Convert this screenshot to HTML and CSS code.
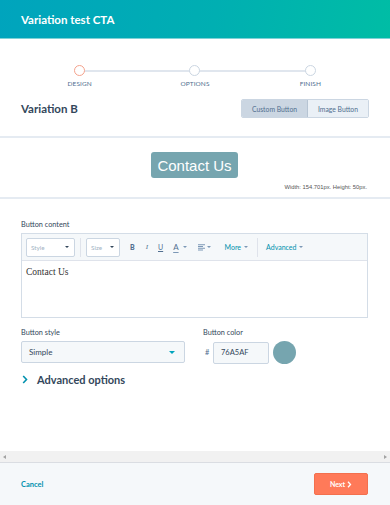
FILE: index.html
```html
<!DOCTYPE html>
<html>
<head>
<meta charset="utf-8">
<link rel="stylesheet" href="styles.css">
</head>
<body>
<div class="app">
  <header class="hdr">Variation test CTA</header>

  <section class="top">
    <div class="steps">
      <div class="step active"><span class="dot"></span><span class="lbl">DESIGN</span></div>
      <div class="step"><span class="dot"></span><span class="lbl">OPTIONS</span></div>
      <div class="step"><span class="dot"></span><span class="lbl">FINISH</span></div>
    </div>
    <div class="varrow">
      <h2 class="vtitle">Variation B</h2>
      <div class="seg">
        <span class="segbtn on">Custom Button</span>
        <span class="segbtn">Image Button</span>
      </div>
    </div>
  </section>

  <section class="preview">
    <div class="cta">Contact Us</div>
    <div class="dims">Width: 154.701px. Height: 50px.</div>
  </section>

  <section class="form">
    <div class="label">Button content</div>
    <div class="editor">
      <div class="toolbar">
        <span class="tsel wstyle">Style<i class="caret"></i></span>
        <span class="tsep"></span>
        <span class="tsel wsize">Size<i class="caret"></i></span>
        <span class="tb bold">B</span>
        <span class="tb ital">I</span>
        <span class="tb und">U</span>
        <span class="tb col">A<i class="caret g"></i></span>
        <span class="tb aln">
          <svg width="7" height="7" viewBox="0 0 7 7"><path d="M0 .75h7M0 2.5h5M0 4.25h7M0 6h5" stroke="#7c98b6" stroke-width="1"/></svg><i class="caret g"></i>
        </span>
        <span class="tlink more">More<i class="caret g"></i></span>
        <span class="tsep sep2"></span>
        <span class="tlink advl">Advanced<i class="caret g"></i></span>
      </div>
      <div class="ebody">Contact Us</div>
    </div>

    <div class="row2">
      <div class="fstyle">
        <div class="label">Button style</div>
        <div class="select">Simple<i class="caret teal"></i></div>
      </div>
      <div class="fcolor">
        <div class="label">Button color</div>
        <div class="colrow">
          <span class="hash">#</span>
          <span class="hex">76A5AF</span>
          <span class="swatch"></span>
        </div>
      </div>
    </div>

    <div class="adv">
      <svg class="chev" width="6" height="9" viewBox="0 0 6 9"><path d="M1.2 1l3.3 3.5L1.2 8" fill="none" stroke="#0091ae" stroke-width="1.6"/></svg>
      <span>Advanced options</span>
    </div>
  </section>

  <div class="hscroll">
    <span class="arr l"></span>
    <span class="arr r"></span>
  </div>

  <footer class="foot">
    <span class="cancel">Cancel</span>
    <span class="next">Next <svg width="5" height="7" viewBox="0 0 5 7"><path d="M1 .8l2.5 2.7L1 6.2" fill="none" stroke="#fff" stroke-width="1.3"/></svg></span>
  </footer>
</div>
</body>
</html>
```

FILE: styles.css
```css
* { box-sizing: border-box; margin: 0; padding: 0; }
html, body { width: 390px; height: 505px; overflow: hidden; background: #fff; }
body { font-family: Lato, "Open Sans", sans-serif; color: #33475b; }

.app { display: flex; flex-direction: column; height: 505px; }

.hdr {
  height: 39px; flex: none;
  display: flex; align-items: center;
  padding-left: 21px;
  background: linear-gradient(100deg, #00a4bd 0%, #00afb2 55%, #00bda5 100%);
  color: #fff; font-weight: 700; font-size: 11.5px;
  border-bottom: 1px solid #7fd1d6;
}

.top { padding: 26px 22px 0 22px; border-bottom: 2px solid #e5ebf2; height: 99px; flex: none; }
.steps { display: grid; grid-template-columns: repeat(3, 1fr); }
.step { position: relative; display: flex; flex-direction: column; align-items: center; }
.step + .step::before {
  content: ""; position: absolute; top: 5px; left: -50%; right: 50%;
  height: 1.5px; background: #e0e6ee;
}
.dot {
  position: relative; z-index: 1;
  width: 11px; height: 11px; border-radius: 50%;
  border: 1.3px solid #cbd6e2; background: #fff;
}
.step.active .dot { border-color: #f5a28c; }
.lbl { margin-top: 4px; font-size: 6.5px; color: #516f90; letter-spacing: 0.1px; }

.varrow { display: flex; align-items: center; justify-content: space-between; margin-top: 12px; }
.vtitle { font-size: 11.5px; font-weight: 700; color: #33475b; margin-left: -1px; }
.seg { display: flex; border: 1px solid #cbd6e2; border-radius: 2px; overflow: hidden; margin-right: -1px; }
.segbtn { height: 17px; width: 60px; display: flex; align-items: center; justify-content: center; font-size: 6.8px; color: #516f90; background: #eaf0f6; }
.segbtn.on { width: 66px; background: #cbd6e2; border-right: 1px solid #b6c4d3; }

.preview { height: 61px; flex: none; border-bottom: 2px solid #e5ebf2; display: flex; flex-direction: column; align-items: center; padding: 14px 23px 0 23px; }
.cta {
  width: 87px; height: 26px; border-radius: 3px;
  background: #76a5af; color: #fff;
  font-family: "Liberation Sans", Arial, sans-serif; font-size: 15px;
  display: flex; align-items: center; justify-content: center;
  margin-left: -1px;
}
.dims { align-self: flex-end; margin-top: 6px; font-size: 5.8px; color: #555; font-family: "Liberation Sans", Arial, sans-serif; }

.form { flex: 1; padding: 21px 22px 0 21px; }
.label { font-size: 7.3px; color: #33475b; margin-bottom: 4px; }

.editor { border: 1px solid #d4dde7; }
.toolbar {
  height: 27px; background: #f5f8fa; border-bottom: 1px solid #dfe3eb;
  display: flex; align-items: center; padding-left: 4px;
}
.tsel {
  height: 19px; border: 1px solid #cbd6e2; background: #fff; border-radius: 2px;
  display: flex; align-items: center; justify-content: space-between;
  padding: 0 5px 0 4px; font-size: 6.3px; color: #a3b3c4;
}
.wstyle { width: 49px; }
.wsize { width: 34px; }
.tsep { width: 1px; height: 19px; background: #dfe3eb; margin: 0 5px; }
.caret { display: inline-block; width: 0; height: 0; border-left: 2.5px solid transparent; border-right: 2.5px solid transparent; border-top: 2.5px solid #33475b; margin-left: 3px; }
.caret.g { border-top-color: #7c98b6; }
.caret.teal { border-top-color: #00a4bd; border-left-width: 3px; border-right-width: 3px; border-top-width: 3px; }
.tb { font-size: 7px; color: #516f90; display: flex; align-items: center; }
.bold { font-weight: 900; margin-left: 10px; }
.ital { font-style: italic; font-family: "Liberation Serif", serif; margin-left: 11px; }
.und { text-decoration: underline; margin-left: 10px; }
.col { margin-left: 10px; font-size: 8px; text-decoration: underline; text-decoration-thickness: 1.3px; text-underline-offset: 2px; text-decoration-color: #7c98b6; }
.col .caret { text-decoration: none; margin-left: 4px; }
.aln { margin-left: 11px; }
.aln .caret { margin-left: 2px; }
.tlink { font-size: 7px; color: #0091ae; display: flex; align-items: center; }
.more { margin-left: 14px; }
.sep2 { margin-left: 9px; margin-right: 0; }
.advl { margin-left: 8px; }

.ebody { height: 56px; padding: 6px 4px; font-family: "Liberation Serif", serif; font-size: 9.5px; color: #333; }

.row2 { display: flex; margin-top: 10px; }
.fstyle { width: 164px; }
.select {
  height: 22px; background: #f5f8fa; border: 1px solid #cbd6e2; border-radius: 2px;
  display: flex; align-items: center; justify-content: space-between;
  padding: 0 9px 0 7px; font-size: 8px; color: #33475b;
}
.fcolor { margin-left: 18px; }
.colrow { display: flex; align-items: center; }
.hash { font-size: 7.5px; color: #516f90; width: 8px; margin-left: 2px; }
.hex {
  width: 56px; height: 22px; background: #f5f8fa; border: 1px solid #cbd6e2; border-radius: 2px;
  display: flex; align-items: center; padding-left: 7px; font-size: 7.5px; color: #33475b;
}
.swatch { width: 23px; height: 23px; border-radius: 50%; background: #76a5af; margin-left: 4px; }

.adv { display: flex; align-items: center; margin-top: 9px; }
.chev { margin-left: 1px; }
.adv span { margin-left: 9px; font-size: 11px; font-weight: 700; color: #33475b; }

.hscroll { height: 12px; flex: none; background: #f1f1f1; border-bottom: 1px solid #dadde2; display: flex; align-items: center; justify-content: space-between; padding: 0 3px; }
.arr { width: 0; height: 0; border-top: 2.5px solid transparent; border-bottom: 2.5px solid transparent; }
.arr.l { border-right: 3px solid #a3a3a3; }
.arr.r { border-left: 3px solid #a3a3a3; }

.foot { height: 42px; flex: none; background: #f5f8fa; display: flex; align-items: center; justify-content: space-between; padding: 0 22px 0 21px; }
.cancel { font-size: 7.5px; font-weight: 700; color: #0091ae; }
.next {
  width: 54px; height: 22px; background: #ff7a59; border-radius: 2px; border: 1px solid #f3704e;
  color: #fff; font-size: 7px; font-weight: 700;
  display: flex; align-items: center; justify-content: center; gap: 2px;
}
```
